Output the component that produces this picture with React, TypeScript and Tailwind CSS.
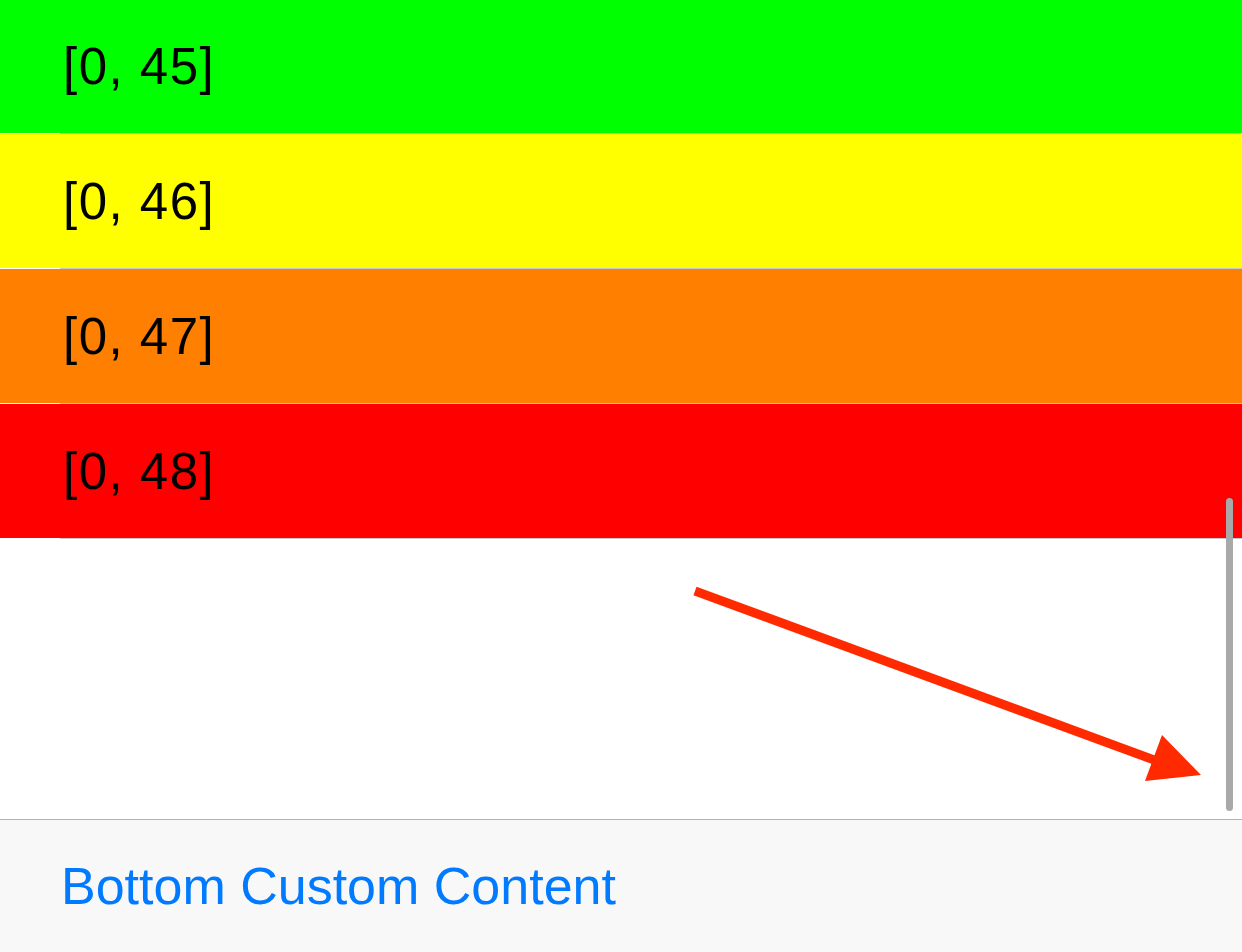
const rows = [
  { label: "[0, 45]", color: "bg-[#00ff00]" },
  { label: "[0, 46]", color: "bg-[#ffff00]" },
  { label: "[0, 47]", color: "bg-[#ff8000]" },
  { label: "[0, 48]", color: "bg-[#ff0000]" },
];

const Separator = () => (
  <div className="h-px bg-white">
    <div className="ml-[60px] h-px bg-[#c8c7cc]" />
  </div>
);

const App = () => {
  return (
    <div className="flex h-[952px] w-[1242px] flex-col overflow-hidden bg-white font-['Liberation_Sans',Arial,sans-serif]">
      <div className="relative flex-1 overflow-hidden">
        <div className="-mt-px">
          {rows.map((row) => (
            <div key={row.label}>
              <div className={`flex h-[134px] items-center pl-[63px] pt-[2px] text-[51px] tracking-[1.5px] text-black ${row.color}`}>
                {row.label}
              </div>
              <Separator />
            </div>
          ))}
        </div>

        {/* scroll indicator */}
        <div className="absolute right-[9px] top-[498px] h-[313px] w-[7px] rounded-full bg-[#a9a9a9]" />

        {/* annotation arrow */}
        <svg className="absolute left-0 top-0" width="1242" height="819" viewBox="0 0 1242 819">
          <line x1="695" y1="591" x2="1165" y2="764" stroke="#ff2a00" strokeWidth="9" />
          <polygon points="1201,775 1162,735 1145,781" fill="#ff2a00" />
        </svg>
      </div>

      <div className="h-px bg-[#b2b2b2]" />
      <div className="flex h-[132px] items-center bg-[#f8f8f8] pl-[61px] text-[52px] text-[#007aff]">
        Bottom Custom Content
      </div>
    </div>
  );
};

export default App;
